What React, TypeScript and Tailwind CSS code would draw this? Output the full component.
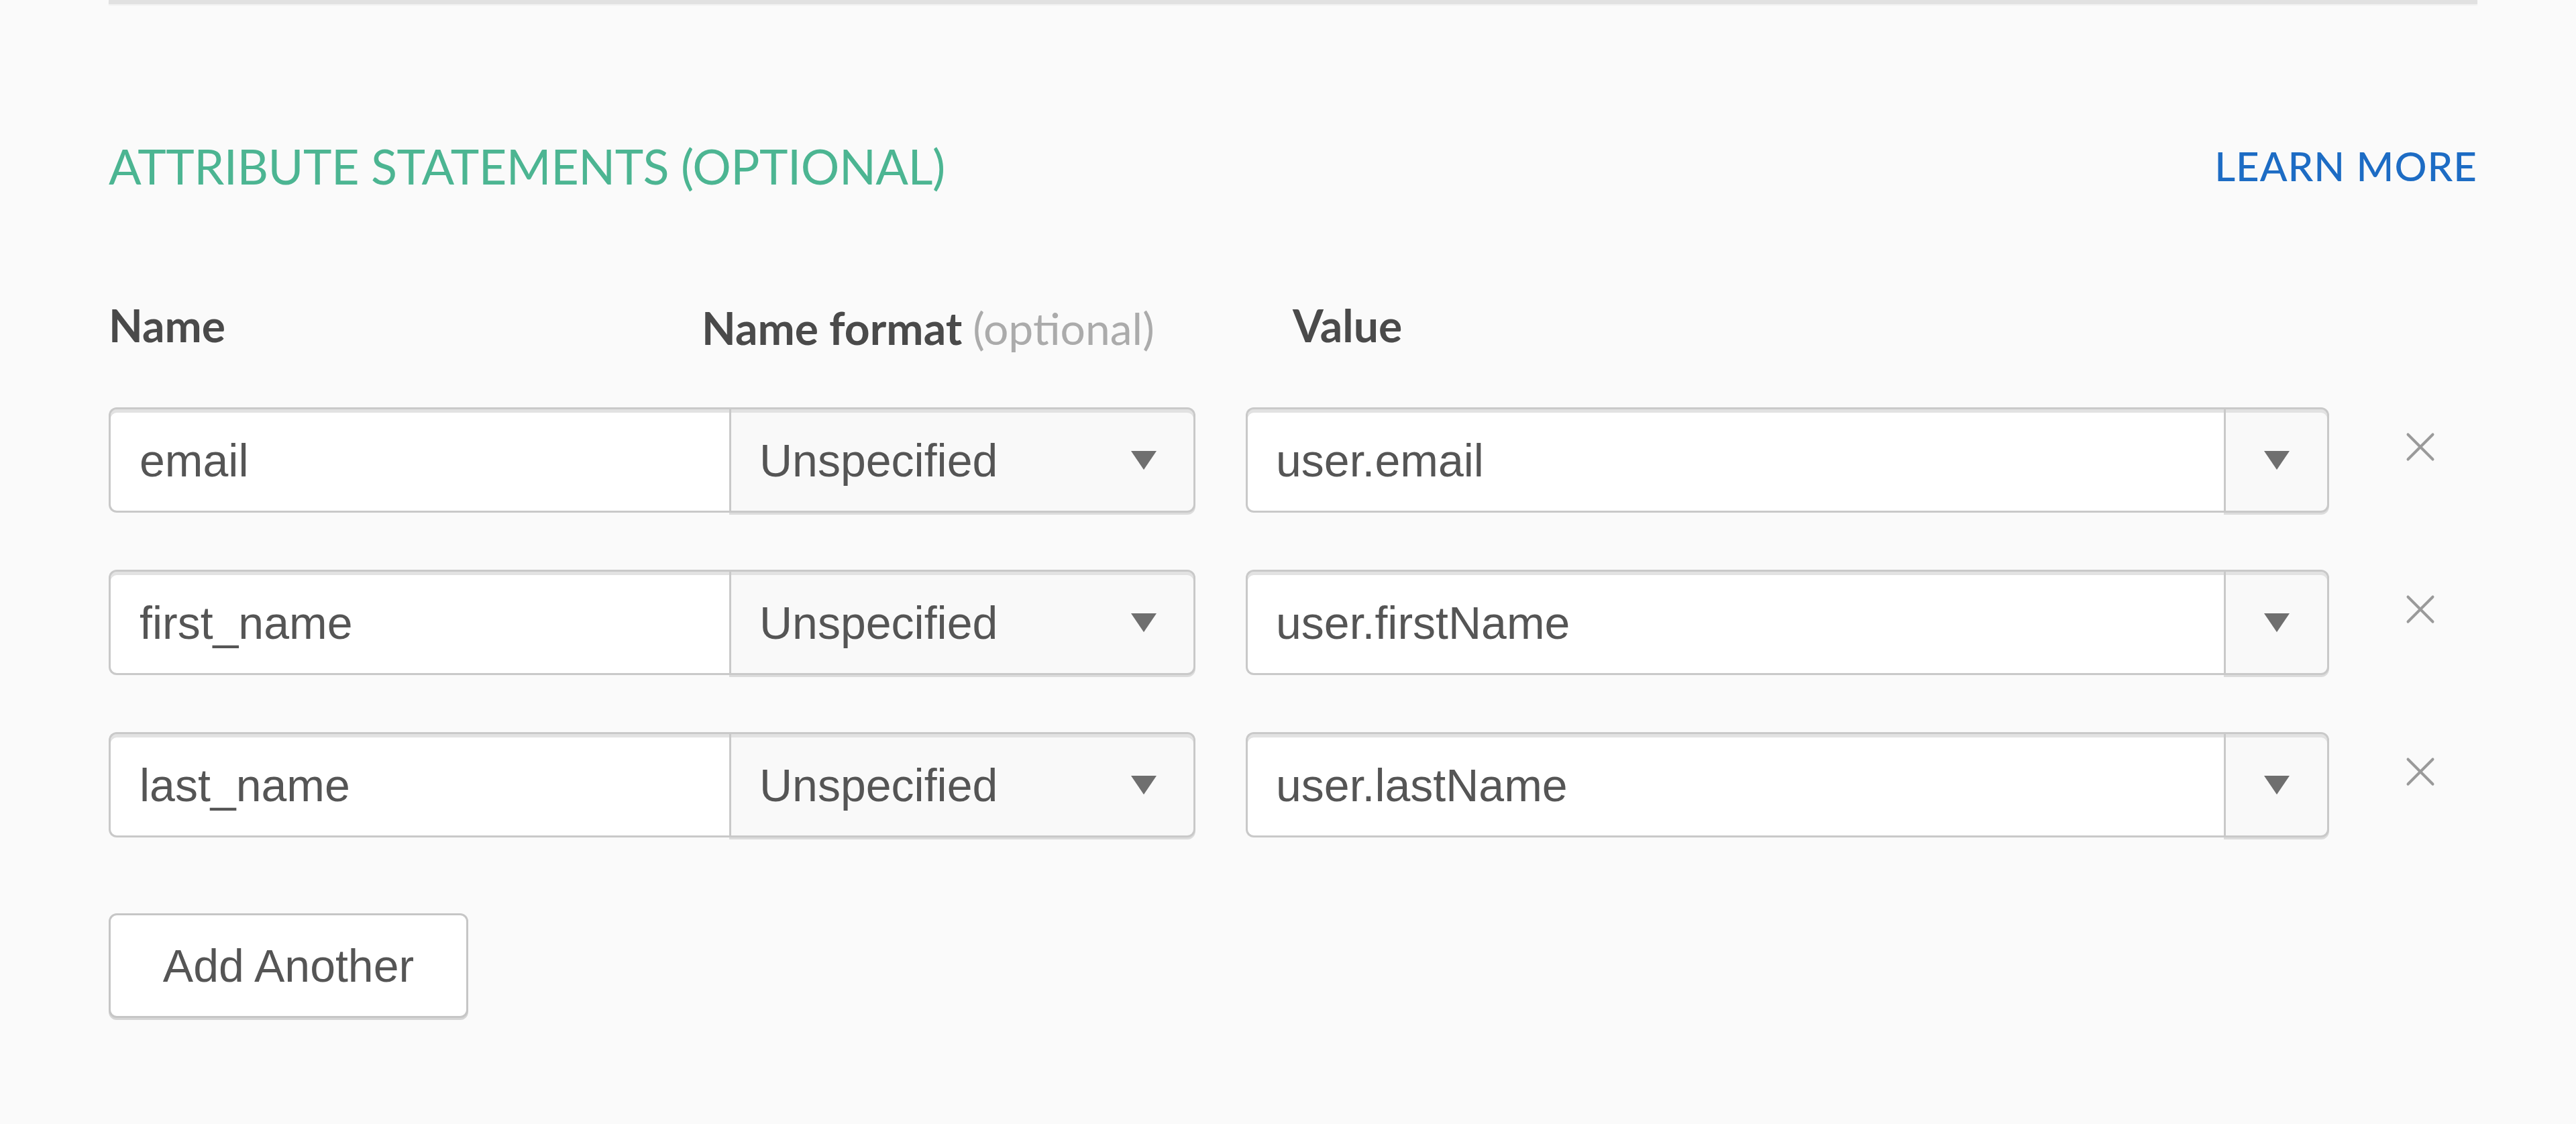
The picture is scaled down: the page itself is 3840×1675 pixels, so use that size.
import { X } from "lucide-react"

const rows = [
  { name: "email", value: "user.email" },
  { name: "first_name", value: "user.firstName" },
  { name: "last_name", value: "user.lastName" },
]

const Caret = () => (
  <svg width="38" height="28" viewBox="0 0 38 28" className="block">
    <path d="M0 0 H38 L19 28 Z" fill="#6f6f6f" />
  </svg>
)

const AttributeRow = ({ name, value }: { name: string; value: string }) => {
  return (
    <div className="flex items-center h-[157px]">
      <div className="flex h-full w-[1620px]">
        <div className="flex items-center w-[925px] h-full bg-white border-[3px] border-r-0 border-[#c9c9c9] rounded-l-[12px] shadow-[inset_0_5px_0_#e2e2e2] pl-[43px]">
          {name}
        </div>
        <div className="flex items-center justify-between w-[695px] h-full bg-[#f9f9f9] border-[3px] border-[#c9c9c9] rounded-r-[12px] shadow-[inset_0_5px_0_#e2e2e2,0_3px_0_#dcdcdc] pl-[42px] pr-[55px]">
          <span>Unspecified</span>
          <Caret />
        </div>
      </div>
      <div className="flex h-full ml-[75px] w-[1615px]">
        <div className="flex items-center flex-1 h-full bg-white border-[3px] border-r-0 border-[#c9c9c9] rounded-l-[12px] shadow-[inset_0_5px_0_#e2e2e2] pl-[42px]">
          {value}
        </div>
        <div className="flex items-center justify-center w-[157px] h-full bg-[#f9f9f9] border-[3px] border-[#c9c9c9] rounded-r-[12px] shadow-[inset_0_5px_0_#e2e2e2,0_3px_0_#dcdcdc]">
          <Caret />
        </div>
      </div>
      <button className="ml-[99px] -mt-[40px] text-[#9a9a9a]">
        <X size={74} strokeWidth={1.3} />
      </button>
    </div>
  )
}

const App = () => {
  return (
    <main className="min-h-screen bg-[#fafafa] pl-[162px] pr-[147px] pb-[150px] text-[68px] text-[#555] font-['Liberation_Sans',Arial,sans-serif]">
      <div className="h-[6px] bg-[#e1e1e1] shadow-[0_2px_2px_#eeeeee]" />

      <header className="flex items-center justify-between mt-[205px] h-[72px]">
        <h2 className="font-['Lato',sans-serif] text-[72px] leading-none text-[#4cb592] tracking-[-0.5px]">
          ATTRIBUTE STATEMENTS (OPTIONAL)
        </h2>
        <a className="font-['Lato',sans-serif] text-[60px] leading-none text-[#1d6cc4] font-medium tracking-[1px]">
          LEARN MORE
        </a>
      </header>

      <div className="flex items-center mt-[168px] h-[68px] font-['Lato',sans-serif] text-[66px] leading-none font-bold text-[#4a4a4a]">
        <div className="w-[884px]">Name</div>
        <div className="w-[881px] mt-[8px]">
          Name format <span className="font-normal text-[#ababab]">(optional)</span>
        </div>
        <div>Value</div>
      </div>

      <div className="flex flex-col gap-[85px] mt-[88px]">
        {rows.map((r) => (
          <AttributeRow key={r.name} name={r.name} value={r.value} />
        ))}
      </div>

      <button className="mt-[113px] w-[536px] h-[156px] bg-white border-[3px] border-[#c6c6c6] rounded-[12px] shadow-[0_3px_0_#d6d6d6] text-[#555]">
        Add Another
      </button>
    </main>
  )
}

export default App
